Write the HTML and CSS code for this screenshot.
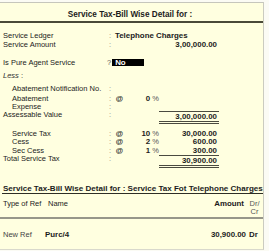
FILE: index.html
```html
<!DOCTYPE html>
<html>
<head>
<meta charset="utf-8">
<link rel="stylesheet" href="styles.css">
</head>
<body>
<div class="panel">
  <div class="title">Service Tax-Bill Wise Detail for :</div>
  <div class="form">
    <div class="row tight first">
      <span class="lbl">Service Ledger</span><span class="col">:</span><span class="val">Telephone Charges</span>
    </div>
    <div class="row tight">
      <span class="lbl">Service Amount</span><span class="col">:</span><span></span><span></span><span class="amt">3,00,000.00</span>
    </div>
    <div class="row pure">
      <span class="lbl">Is Pure Agent Service</span><span class="ask"><span class="q">?</span><span class="box">No</span></span>
    </div>
    <div class="row less">
      <span class="lbl"><i>Less</i> :</span>
    </div>
    <div class="row notif">
      <span class="lbl ind">Abatement Notification No.</span><span class="col">:</span>
    </div>
    <div class="row">
      <span class="lbl ind">Abatement</span><span class="col">:</span><span class="at">@</span><span class="pct"><b>0</b> %</span>
    </div>
    <div class="row">
      <span class="lbl ind">Expense</span><span class="col">:</span>
    </div>
    <div class="row sum">
      <span class="lbl">Assessable Value</span><span class="col">:</span><span></span><span></span><span class="amt total">3,00,000.00</span>
    </div>
    <div class="row tax">
      <span class="lbl ind">Service Tax</span><span class="col">:</span><span class="at">@</span><span class="pct"><b>10</b> %</span><span class="amt">30,000.00</span>
    </div>
    <div class="row">
      <span class="lbl ind">Cess</span><span class="col">:</span><span class="at">@</span><span class="pct"><b>2</b> %</span><span class="amt">600.00</span>
    </div>
    <div class="row">
      <span class="lbl ind">Sec Cess</span><span class="col">:</span><span class="at">@</span><span class="pct"><b>1</b> %</span><span class="amt">300.00</span>
    </div>
    <div class="row sum">
      <span class="lbl">Total Service Tax</span><span class="col">:</span><span></span><span></span><span class="amt total">30,900.00</span>
    </div>
  </div>
  <div class="bill">
    <div class="bill-head">Service Tax-Bill Wise Detail for : Service Tax Fot Telephone Charges</div>
    <div class="bill-row hdr">
      <span class="ref">Type of Ref</span><span class="name">Name</span><span class="bamt">Amount</span><span class="drcr">Dr/<br>Cr</span>
    </div>
    <div class="bill-row data">
      <span class="ref">New Ref</span><span class="name">Purc/4</span><span class="bamt">30,900.00</span><span class="drcr">Dr</span>
    </div>
  </div>
</div>
</body>
</html>
```
FILE: styles.css
```css
* { box-sizing: border-box; margin: 0; padding: 0; }
html, body { background: #fbfbf4; }
body {
  width: 269px;
  height: 251px;
  overflow: hidden;
  font-family: "Liberation Sans", Arial, sans-serif;
  font-size: 7.5px;
  color: #1c1c1c;
}
.panel {
  margin-top: 2px;
  width: 264px;
  height: 248px;
  background: #ffffe0;
  border-top: 1px solid #c6c6bc;
  border-right: 1px solid #cbcbc0;
  border-bottom: 1px solid #d9d9cc;
  display: flex;
  flex-direction: column;
}
.title {
  height: 20.3px;
  padding: 8px 3px 0 0;
  line-height: 8px;
  text-align: center;
  font-weight: bold;
  font-size: 8.2px;
  border-bottom: 2px solid #4a4a38;
}
.form { padding-top: 9px; }
.row {
  display: grid;
  grid-template-columns: 106px 8px 11px 34px 60px;
  height: 8.4px;
  line-height: 8.4px;
  white-space: nowrap;
}
.row.tight { height: 8.6px; line-height: 8.6px; }
.lbl { padding-left: 3px; }
.lbl.ind { padding-left: 12px; }
.col { text-align: center; color: #8a8a80; }
.val { grid-column: 3 / 6; padding-left: 1px; font-weight: bold; font-size: 7.9px; }
.amt { grid-column: 5; text-align: right; padding-right: 2px; font-weight: bold; font-size: 7.9px; }
.at { text-align: center; font-weight: bold; }
.pct { text-align: right; color: #555; }
.pct b { color: #1c1c1c; font-size: 7.9px; }
.row.pure { margin-top: 8.4px; height: 9px; line-height: 9px; }
.ask { grid-column: 2 / 6; display: flex; align-items: center; }
.q { margin-left: 1px; color: #555; }
.box {
  margin-left: 1px;
  width: 32px;
  height: 7px;
  line-height: 7px;
  padding-left: 3px;
  background: #000;
  color: #fff;
  font-weight: bold;
  font-size: 7.9px;
}
.row.less { margin-top: 4.9px; }
.row.less i { color: #333; }
.row.notif { margin-top: 5.3px; }
.row.notif + .row { margin-top: 0.8px; }
.row.sum { height: auto; }
.amt.total {
  border-top: 1px solid #4a4a40;
  border-bottom: 3px double #4a4a40;
  line-height: 8px;
  padding-top: 1px;
}
.row.tax { margin-top: 5.5px; }
.bill { margin-top: 17px; }
.bill-head {
  margin-left: 2px;
  padding-left: 1px;
  line-height: 8px;
  font-weight: bold;
  font-size: 8.05px;
  white-space: nowrap;
  border-bottom: 1px solid #2e2e24;
}
.bill-row {
  display: grid;
  grid-template-columns: 45px 1fr 54px 17px;
  line-height: 8px;
}
.bill-row .ref { padding-left: 3px; }
.bill-row.hdr { margin-top: 6px; border-bottom: 2px solid #97978a; padding-bottom: 1px; }
.bill-row.hdr .name { padding-left: 3px; }
.bill-row.hdr .bamt { font-weight: bold; text-align: right; padding-right: 2px; font-size: 7.9px; }
.bill-row.hdr .drcr { text-align: center; color: #555; }
.bill-row.data { margin-top: 12px; }
.bill-row.data .ref { color: #444; }
.bill-row.data .name, .bill-row.data .bamt, .bill-row.data .drcr { font-weight: bold; font-size: 7.9px; }
.bill-row.data .bamt { text-align: right; }
.bill-row.data .drcr { padding-left: 3px; }
```
